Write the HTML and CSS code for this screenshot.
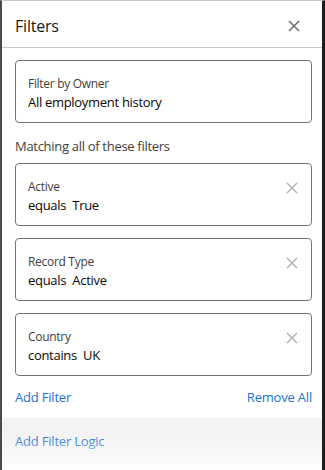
FILE: index.html
```html
<!DOCTYPE html>
<html>
<head>
<meta charset="utf-8">
<link rel="stylesheet" href="styles.css">
</head>
<body>
<div class="frame">
  <div class="header">
    <span class="title">Filters</span>
    <svg class="close" width="12" height="12" viewBox="0 0 12 12"><path d="M1 1L11 11M11 1L1 11" stroke="#6f6f6f" stroke-width="1.6" fill="none"/></svg>
  </div>
  <div class="body">
    <div class="card">
      <div class="label">Filter by Owner</div>
      <div class="value">All employment history</div>
    </div>
    <div class="section">Matching all of these filters</div>
    <div class="list">
      <div class="card">
        <div class="label">Active</div>
        <div class="value">equals&nbsp; True</div>
        <svg class="remove" width="12" height="12" viewBox="0 0 12 12"><path d="M1 1L11 11M11 1L1 11" stroke="#b3b3b3" stroke-width="1.5" fill="none"/></svg>
      </div>
      <div class="card">
        <div class="label">Record Type</div>
        <div class="value">equals&nbsp; Active</div>
        <svg class="remove" width="12" height="12" viewBox="0 0 12 12"><path d="M1 1L11 11M11 1L1 11" stroke="#b3b3b3" stroke-width="1.5" fill="none"/></svg>
      </div>
      <div class="card">
        <div class="label">Country</div>
        <div class="value">contains&nbsp; UK</div>
        <svg class="remove" width="12" height="12" viewBox="0 0 12 12"><path d="M1 1L11 11M11 1L1 11" stroke="#b3b3b3" stroke-width="1.5" fill="none"/></svg>
      </div>
    </div>
    <div class="links">
      <a class="link">Add Filter</a>
      <a class="link">Remove All</a>
    </div>
  </div>
  <div class="footer">
    <a class="link">Add Filter Logic</a>
  </div>
</div>
</body>
</html>
```
FILE: styles.css
```css
* { box-sizing: border-box; }
html, body { margin: 0; padding: 0; background: #fff; }
body {
  font-family: "Open Sans", "Noto Sans", sans-serif;
  color: #181818;
}
.frame {
  position: relative;
  width: 325px;
  height: 470px;
  border-top: 1px solid #c8c8c8;
  border-left: 2px solid #4a4a4a;
  border-right: 3px solid #1e1e1e;
  display: flex;
  flex-direction: column;
  overflow: hidden;
}
.frame::after {
  content: "";
  position: absolute;
  left: -2px; right: -3px; bottom: 0;
  height: 36px;
  background: linear-gradient(to bottom, rgba(255,255,255,0), rgba(255,255,255,0.92));
  pointer-events: none;
}
.header {
  height: 47px;
  flex: none;
  border-bottom: 1px solid #c9c9c9;
  display: flex;
  align-items: center;
  justify-content: space-between;
  padding: 4px 22px 0 13px;
}
.title {
  font-size: 16px;
  color: #1a1a1a;
  letter-spacing: -0.2px;
}
.body {
  padding: 12px 10px 0 13px;
  flex: 1;
}
.card {
  position: relative;
  height: 63px;
  border: 1px solid #747474;
  border-radius: 4px;
  padding: 14px 12px 0 12px;
}
.label {
  font-size: 12px;
  line-height: 17px;
  color: #3e3e3c;
  letter-spacing: -0.3px;
}
.value {
  font-size: 13px;
  line-height: 20px;
  color: #080707;
  letter-spacing: -0.3px;
}
.remove {
  position: absolute;
  right: 13px;
  top: 18px;
}
.section {
  font-size: 13px;
  line-height: 18px;
  color: #3e3e3c;
  margin: 14px 0 8px;
  letter-spacing: -0.3px;
}
.list {
  display: flex;
  flex-direction: column;
  gap: 12px;
}
.links {
  display: flex;
  justify-content: space-between;
  margin-top: 12px;
  line-height: 18px;
}
.link {
  font-size: 13px;
  color: #1b72d4;
  letter-spacing: -0.2px;
  text-decoration: none;
}
.footer {
  height: 52px;
  flex: none;
  background: #f3f3f3;
  padding: 13px 13px 0;
  line-height: 18px;
}
```
